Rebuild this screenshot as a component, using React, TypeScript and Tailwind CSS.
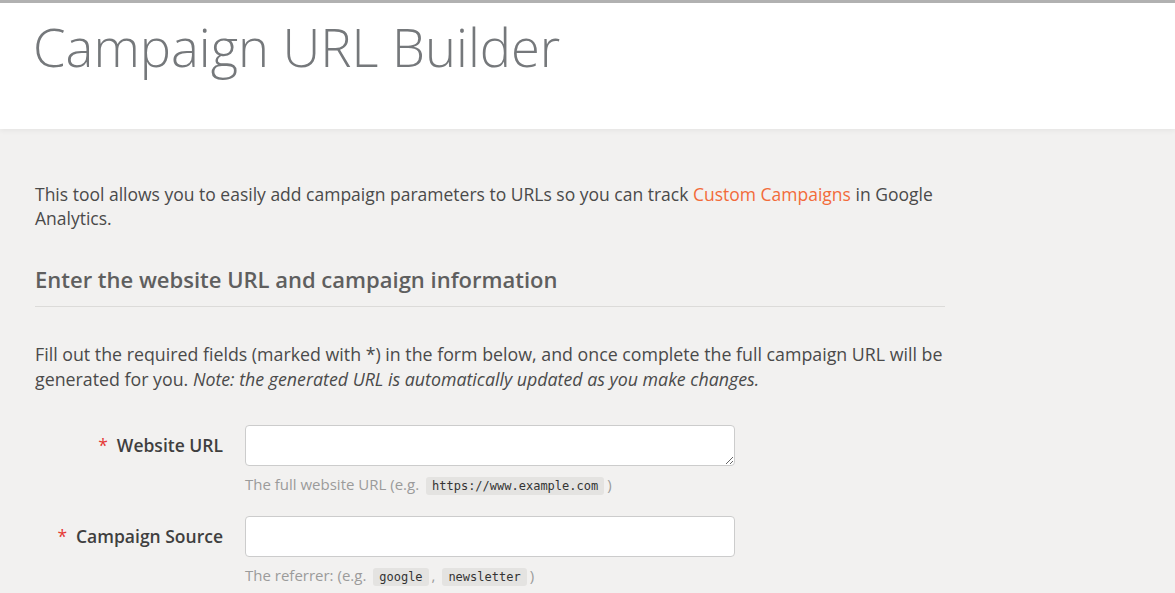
export default function App() {
  return (
    <div className="min-h-screen bg-[#f2f1f0] font-['Open_Sans',sans-serif] text-[#4a4a4a]">
      {/* Header */}
      <header className="h-[129px] bg-white border-t-[3px] border-[#b1b1b1] shadow-[0_2px_5px_rgba(0,0,0,0.05)]">
        <h1 className="pl-[33px] pt-[11px] text-[52.5px] font-light leading-[66px] text-[#75787b]">
          Campaign URL Builder
        </h1>
      </header>

      <main className="w-[910px] ml-[35px] pt-[53px]">
        <p className="text-[17.5px] leading-[24px]">
          This tool allows you to easily add campaign parameters to URLs so you can track{" "}
          <a className="text-[#f26b3a]">Custom Campaigns</a> in Google Analytics.
        </p>

        <h2 className="mt-[36px] pb-[13px] border-b border-[#dcdbd9] text-[22px] font-semibold leading-[27px] text-[#5f5f5f]">
          Enter the website URL and campaign information
        </h2>

        <p className="mt-[35px] text-[17.8px] leading-[25px]">
          Fill out the required fields (marked with *) in the form below, and once complete the full campaign URL will be
          generated for you.{" "}
          <em>Note: the generated URL is automatically updated as you make changes.</em>
        </p>

        <div className="mt-[33px] flex flex-col gap-[19px]">
          <Field label="Website URL" textarea>
            The full website URL (e.g. <Code>https://www.example.com</Code>)
          </Field>
          <Field label="Campaign Source">
            The referrer: (e.g. <Code>google</Code>, <Code>newsletter</Code>)
          </Field>
        </div>
      </main>
    </div>
  );
}

function Field({ label, textarea, children }: { label: string; textarea?: boolean; children: React.ReactNode }) {
  return (
    <div className="flex gap-[22px]">
      <label className="w-[188px] shrink-0 pt-[7px] text-right text-[17.5px] font-semibold leading-[26px] text-[#3f3f3f]">
        <span className="text-[#e53935] mr-[9px] font-normal">*</span>
        {label}
      </label>
      <div className="w-[490px]">
        <div className="h-[41px]">
          {textarea ? (
            <textarea className="block w-full h-[41px] rounded-[4px] border border-[#cccccc] bg-white" />
          ) : (
            <input className="block w-full h-[41px] rounded-[4px] border border-[#cccccc] bg-white" />
          )}
        </div>
        <p className="mt-[7px] text-[15px] leading-[22px] text-[#9b9b9b]">{children}</p>
      </div>
    </div>
  );
}

function Code({ children }: { children: React.ReactNode }) {
  return (
    <code className="mx-[3px] rounded-[3px] bg-[#e4e3e1] px-[6px] py-[2px] font-['DejaVu_Sans_Mono',monospace] text-[12px] text-[#333]">
      {children}
    </code>
  );
}
